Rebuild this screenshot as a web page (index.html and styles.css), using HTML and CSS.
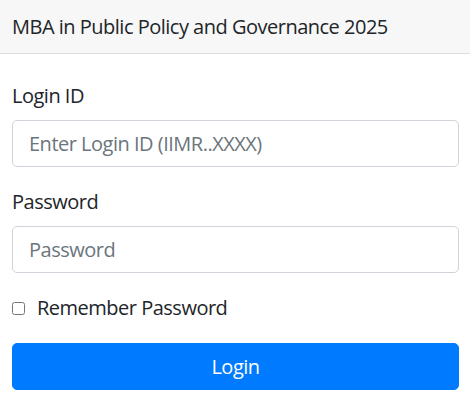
FILE: index.html
```html
<!DOCTYPE html>
<html lang="en">
<head>
<meta charset="utf-8">
<title>Login</title>
<link rel="stylesheet" href="styles.css">
</head>
<body>
<div class="card">
  <div class="card-header">MBA in Public Policy and Governance 2025</div>
  <form class="card-body">
    <div class="group">
      <label class="label" for="lid">Login ID</label>
      <input class="input" id="lid" type="text" placeholder="Enter Login ID (IIMR..XXXX)">
    </div>
    <div class="group">
      <label class="label" for="pwd">Password</label>
      <input class="input" id="pwd" type="password" placeholder="Password">
    </div>
    <div class="check">
      <input class="check-box" id="rem" type="checkbox">
      <label class="check-label" for="rem">Remember Password</label>
    </div>
    <button class="btn" type="button">Login</button>
  </form>
</div>
</body>
</html>
```

FILE: styles.css
```css
* { box-sizing: border-box; }
html, body { margin: 0; padding: 0; background: #fff; }
body {
  font-family: "Open Sans", "Noto Sans", sans-serif;
  font-size: 20px;
  line-height: 30px;
  letter-spacing: -0.5px;
  color: #212529;
}
.card { display: flex; flex-direction: column; }
.card-header {
  background: #f7f7f7;
  border-bottom: 1px solid #dfdfdf;
  padding: 12px 12px 11px;
  height: 54px;
}
.card-body {
  display: flex;
  flex-direction: column;
  gap: 20px;
  padding: 27px 11px 0 12px;
  margin: 0;
}
.group { display: flex; flex-direction: column; }
.label { margin-bottom: 9px; }
.input {
  height: 47px;
  border: 1px solid #ced4da;
  border-radius: 5px;
  padding: 0 16px;
  font: inherit;
  letter-spacing: inherit;
  color: #495057;
  background: #fff;
  outline: none;
}
.input::placeholder { color: #6c757d; opacity: 1; }
.check {
  display: flex;
  align-items: flex-start;
  height: 30px;
}
.check-box {
  width: 13px;
  height: 13px;
  margin: 9px 12px 0 0;
}
.check-label { line-height: 30px; }
.btn {
  height: 47px;
  border: 1px solid #007bff;
  background: #007bff;
  color: #fff;
  border-radius: 5px;
  font: inherit;
  letter-spacing: inherit;
  padding: 0;
}
```
